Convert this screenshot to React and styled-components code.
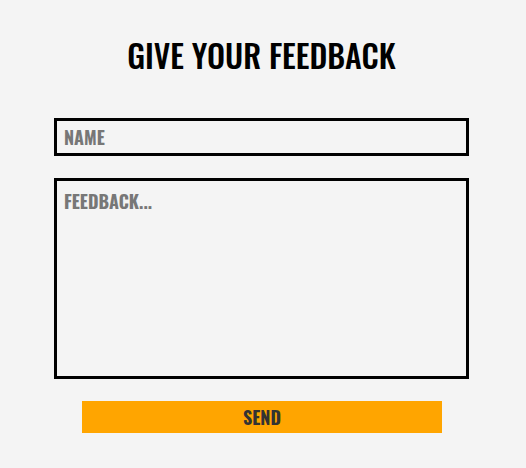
import React from "react";
import styled, { createGlobalStyle } from "styled-components";

const GlobalStyle = createGlobalStyle`
  html, body {
    margin: 0;
    padding: 0;
    background: #f4f4f4;
  }
  body {
    font-family: "Oswald", "Liberation Sans Narrow", "DejaVu Sans Condensed", "Liberation Sans", sans-serif;
  }
`;

const Page = styled.div`
  width: 100%;
  min-height: 100vh;
  display: flex;
  justify-content: center;
  background: #f4f4f4;
`;

const Form = styled.form`
  width: 415px;
  display: flex;
  flex-direction: column;
  align-items: center;
  padding-top: 35px;
  margin-left: -3px;
`;

const Title = styled.h1`
  margin: 0 0 43px;
  font-size: 32px;
  font-weight: 500;
  line-height: 40px;
  color: #000;
`;

const fieldStyles = `
  width: 100%;
  box-sizing: border-box;
  border: 3px solid #000;
  background: #f4f4f4;
  font-family: inherit;
  font-size: 18px;
  font-weight: 700;
  color: #000;
  padding: 4px 7px;
  outline: none;

  &::placeholder {
    color: #777;
    opacity: 1;
  }
`;

const Input = styled.input`
  ${fieldStyles}
  height: 38px;
  margin-bottom: 22px;
`;

const TextArea = styled.textarea`
  ${fieldStyles}
  height: 201px;
  resize: none;
  padding-top: 7px;
  margin-bottom: 22px;
  display: block;
`;

const Button = styled.button`
  width: 360px;
  height: 32px;
  border: none;
  background: #ffa500;
  color: #333;
  font-family: inherit;
  font-size: 18px;
  font-weight: 700;
  cursor: pointer;
  margin-left: 1px;
`;

export default function App() {
  return (
    <Page>
      <GlobalStyle />
      <Form onSubmit={(e) => e.preventDefault()}>
        <Title>GIVE YOUR FEEDBACK</Title>
        <Input type="text" placeholder="NAME" />
        <TextArea placeholder="FEEDBACK..." />
        <Button type="submit">SEND</Button>
      </Form>
    </Page>
  );
}
